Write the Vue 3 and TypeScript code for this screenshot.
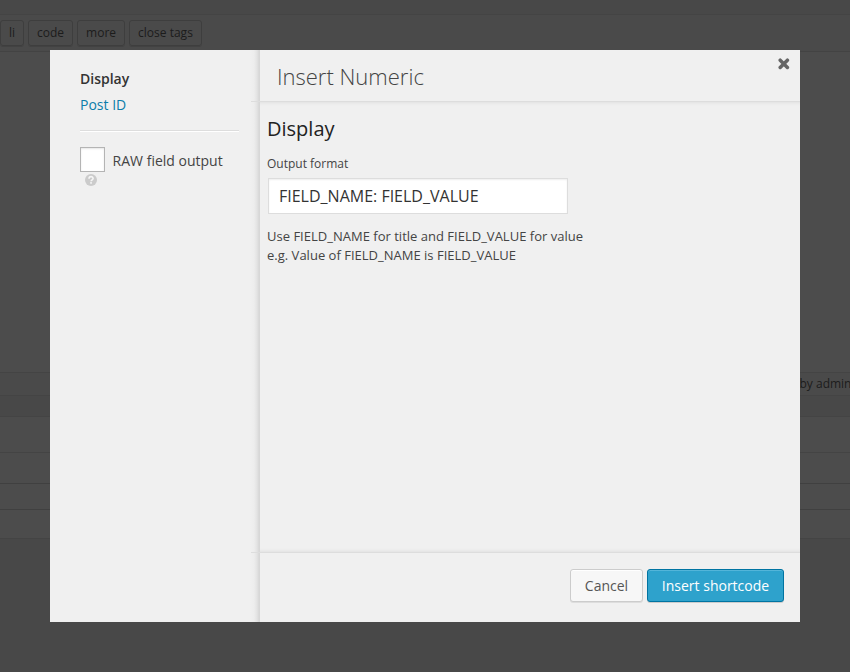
<script setup lang="ts">
import { ref } from 'vue'

const quickTags: string[] = ['li', 'code', 'more', 'close tags']
const raw = ref(false)
const outputFormat = ref('FIELD_NAME: FIELD_VALUE')
</script>

<template>
  <div class="screen">
    <div class="page">
      <div class="top"></div>
      <div class="toolbar">
        <span v-for="tag in quickTags" :key="tag" class="tag">{{ tag }}</span>
      </div>
      <div class="editor"></div>
      <div class="status">by admin</div>
      <div class="gap"></div>
      <div class="row r1"></div>
      <div class="row r2"></div>
      <div class="row r3"></div>
      <div class="row r4"></div>
    </div>

    <div class="modal" role="dialog" aria-labelledby="modal-title">
      <aside class="side">
        <h3>Display</h3>
        <a class="link">Post ID</a>
        <div class="divider"></div>
        <label class="check">
          <input v-model="raw" type="checkbox" />
          <span>RAW field output</span>
        </label>
        <svg class="help" viewBox="0 0 12 12">
          <circle cx="6" cy="6" r="6" fill="#cbcbcb" />
          <path d="M4 4.7C4 2 8.1 2 8.1 4.5C8.1 5.8 6.1 5.8 6.1 7.2" fill="none" stroke="#f6f6f6" stroke-width="1.6" />
          <rect x="5.2" y="8.1" width="1.7" height="1.6" fill="#f6f6f6" />
        </svg>
      </aside>
      <section class="main">
        <header class="head">
          <h1 id="modal-title">Insert Numeric</h1>
          <svg class="close" viewBox="0 0 12 12">
            <path d="M2.2 2.2L9.4 9.4M9.4 2.2L2.2 9.4" fill="none" stroke="#666" stroke-width="3.5" stroke-linecap="round" />
          </svg>
        </header>
        <div class="body">
          <h2>Display</h2>
          <div class="label">Output format</div>
          <input v-model="outputFormat" class="field" type="text" />
          <p>Use FIELD_NAME for title and FIELD_VALUE for value<br />e.g. Value of FIELD_NAME is FIELD_VALUE</p>
        </div>
        <footer class="foot">
          <button class="btn cancel">Cancel</button>
          <button class="btn primary">Insert shortcode</button>
        </footer>
      </section>
    </div>
  </div>
</template>

<style>
body {
  margin: 0;
  overflow: hidden;
}
</style>

<style scoped>
* {
  box-sizing: border-box;
}
.screen {
  position: relative;
  width: 850px;
  height: 672px;
  overflow: hidden;
  background: #484848;
  font-family: 'Open Sans', sans-serif;
  color: #444;
}
.page {
  display: flex;
  flex-direction: column;
  height: 672px;
}
.top {
  height: 15px;
  border-bottom: 1px solid #444;
}
.toolbar {
  display: flex;
  gap: 4px;
  height: 37px;
  padding-top: 5px;
  background: #4a4a4a;
  border-bottom: 1px solid #434343;
}
.tag {
  height: 26px;
  padding: 0 8px;
  border: 1px solid #3e3e3e;
  border-radius: 3px;
  box-shadow: 0 1px 0 #424242;
  font-size: 12px;
  line-height: 24px;
  color: #1c1c1c;
}
.editor {
  height: 321px;
  background: #4c4c4c;
  border-bottom: 1px solid #444;
}
.status {
  height: 23px;
  padding-left: 799.5px;
  background: #4a4a4a;
  border-bottom: 1px solid #444;
  font-size: 12px;
  line-height: 22px;
  color: #1c1c1c;
  white-space: nowrap;
}
.gap {
  height: 21px;
  border-bottom: 1px solid #444;
}
.row {
  background: #4c4c4c;
  border-bottom: 1px solid #444;
}
.r1 {
  height: 36px;
}
.r2 {
  height: 31px;
  border-color: #404040;
}
.r3 {
  height: 26px;
  border-color: #404040;
}
.r4 {
  height: 29px;
}
.modal {
  position: absolute;
  left: 50px;
  top: 50px;
  display: flex;
  width: 750px;
  height: 572px;
  background: #f0f0f0;
}
.side {
  width: 210px;
  padding: 19px 21px 0 30px;
  background: linear-gradient(to right, #f0f0f0 200px, #ededed 204px, #e3e3e3 207px, #d7d7d7 209px, #d7d7d7 210px);
}
h1,
h2,
h3,
p {
  margin: 0;
}
h3 {
  font-size: 14px;
  font-weight: 600;
  line-height: 20px;
  color: #333;
}
.link {
  display: block;
  margin-top: 6px;
  font-size: 14px;
  line-height: 20px;
  color: #0c7daa;
}
.divider {
  height: 2px;
  margin-top: 15px;
  background: #fff;
  border-top: 1px solid #ddd;
}
.check {
  display: flex;
  gap: 7.6px;
  margin-top: 15px;
  font-size: 14px;
  line-height: 27px;
  white-space: nowrap;
}
.check input {
  flex: none;
  appearance: none;
  width: 25px;
  height: 25px;
  margin: 0;
  background: #fff;
  border: 1px solid #b4b4b4;
  box-shadow: inset 0 1px 2px rgba(0, 0, 0, 0.1);
}
.help {
  display: block;
  width: 12px;
  height: 12px;
  margin: 0 0 0 5px;
}
.main {
  display: flex;
  flex: 1;
  flex-direction: column;
}
.head {
  display: flex;
  justify-content: space-between;
  height: 52px;
  margin-left: -9px;
  padding: 8px 10px 0 26px;
  border-bottom: 1px solid #ddd;
}
h1 {
  font-size: 22px;
  font-weight: 300;
  line-height: 36px;
}
.close {
  width: 12px;
  height: 12px;
}
.body {
  flex: 1;
  padding: 12px 7px 0;
  box-shadow: inset 0 4px 4px -4px rgba(0, 0, 0, 0.1), inset 0 -4px 4px -4px rgba(0, 0, 0, 0.1);
}
h2 {
  font-size: 20px;
  font-weight: 400;
  line-height: 30px;
  color: #222;
}
.label {
  margin-top: 11px;
  font-size: 12px;
  line-height: 18px;
}
.field {
  display: block;
  width: 300px;
  height: 36px;
  margin: 5px 0 0 1px;
  padding: 0 10px;
  background: #fff;
  border: 1px solid #ddd;
  box-shadow: inset 0 1px 2px rgba(0, 0, 0, 0.07);
  font: 16px 'Open Sans', sans-serif;
  color: #333;
  outline: none;
}
p {
  margin-top: 13px;
  font-size: 13px;
  line-height: 19px;
  letter-spacing: 0.01px;
}
.foot {
  display: flex;
  justify-content: flex-end;
  gap: 4px;
  height: 70px;
  margin-left: -9px;
  padding: 16px 16px 0 0;
  border-top: 1px solid #ddd;
}
.btn {
  height: 33px;
  padding: 0 14px;
  background: #f7f7f7;
  border: 1px solid #ccc;
  border-radius: 3px;
  box-shadow: inset 0 1px 0 #fff, 0 1px 0 rgba(0, 0, 0, 0.08);
  font: 14px 'Open Sans', sans-serif;
  color: #555;
}
.cancel {
  width: 73px;
  padding: 0;
}
.primary {
  width: 137px;
  padding: 0;
  background: #2ea2cc;
  border-color: #0074a2;
  box-shadow: inset 0 1px 0 rgba(120, 200, 230, 0.5), 0 1px 0 rgba(0, 0, 0, 0.15);
  color: #fff;
}
</style>
